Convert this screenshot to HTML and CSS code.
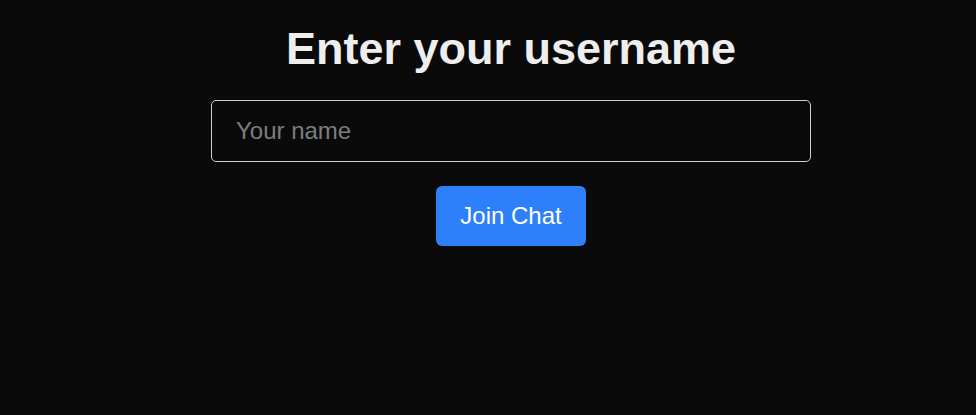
FILE: index.html
```html
<!DOCTYPE html>
<html lang="en">
<head>
    <meta charset="UTF-8">
    <title>Chat - Join</title>
    <meta name="viewport" content="width=device-width, initial-scale=1.0">
    <link rel="stylesheet" href="styles.css">
</head>
<body>
    <div class="join-wrap">
        <h1 class="join-title">Enter your username</h1>
        <form class="join-form" onsubmit="event.preventDefault();">
            <input type="text" id="username" class="name-input" placeholder="Your name">
            <button type="submit" class="join-btn">Join Chat</button>
        </form>
    </div>
</body>
</html>
```

FILE: styles.css
```css
body, html {
    margin: 0; padding: 0; background: #0a0a0a; color: #eee;
    font-family: 'Liberation Sans', Arial, Helvetica, sans-serif;
}
.join-wrap {
    display: flex; flex-direction: column; align-items: center;
    padding: 23px 0 0 46px;
}
.join-title {
    margin: 0 0 25px; font-size: 45px; font-weight: bold; color: #eeeeee;
}
.join-form {
    display: flex; flex-direction: column; align-items: center; gap: 24px;
}
.name-input {
    width: 600px; box-sizing: border-box;
    padding: 16px 24px; font-size: 24px; font-family: inherit;
    background: #0a0a0a; color: #eee;
    border: 1px solid #cfcfcf; border-radius: 5px; outline: none;
}
.name-input::placeholder { color: #7d7d7d; }
.join-btn {
    padding: 16px 24px; font-size: 24px; font-family: inherit;
    background: #2d7ffa; color: #fff;
    border: none; border-radius: 6px; cursor: pointer;
}
.join-btn:hover { background: #1e6ee6; }
```
